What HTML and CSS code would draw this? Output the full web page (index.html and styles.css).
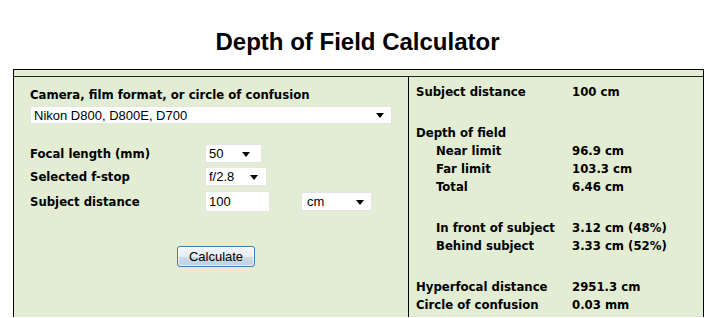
FILE: index.html
```html
<!DOCTYPE html>
<html lang="en">
<head>
  <meta charset="UTF-8">
  <title>Depth of Field Calculator</title>
  <link rel="stylesheet" href="styles.css">
</head>
<body>
  <h1>Depth of Field Calculator</h1>

  <div class="calc">
    <div class="calc-top"></div>
    <div class="calc-body">

      <!-- inputs -->
      <div class="inputs">
        <div class="label">Camera, film format, or circle of confusion</div>
        <span class="pick pick-camera">
          <select id="camera">
            <option>Nikon D800, D800E, D700</option>
          </select>
        </span>

        <div class="form-row row-focal">
          <span class="label">Focal length (mm)</span>
          <span class="pick pick-focal">
            <select id="focal"><option>50</option></select>
          </span>
        </div>
        <div class="form-row row-stop">
          <span class="label">Selected f-stop</span>
          <span class="pick pick-stop">
            <select id="fstop"><option>f/2.8</option></select>
          </span>
        </div>
        <div class="form-row row-dist">
          <span class="label">Subject distance</span>
          <input type="text" id="distance" value="100">
          <span class="pick pick-unit">
            <select id="unit"><option>cm</option></select>
          </span>
        </div>

        <div class="actions">
          <button type="button">Calculate</button>
        </div>
      </div>

      <!-- results -->
      <div class="results">
        <div class="group">
          <div class="res-row"><span class="res-label">Subject distance</span><span>100 cm</span></div>
        </div>
        <div class="group">
          <div class="res-row"><span class="res-label">Depth of field</span><span></span></div>
          <div class="res-row sub"><span class="res-label">Near limit</span><span>96.9 cm</span></div>
          <div class="res-row sub"><span class="res-label">Far limit</span><span>103.3 cm</span></div>
          <div class="res-row sub"><span class="res-label">Total</span><span>6.46 cm</span></div>
        </div>
        <div class="group">
          <div class="res-row sub"><span class="res-label">In front of subject</span><span>3.12 cm (48%)</span></div>
          <div class="res-row sub"><span class="res-label">Behind subject</span><span>3.33 cm (52%)</span></div>
        </div>
        <div class="group">
          <div class="res-row"><span class="res-label">Hyperfocal distance</span><span>2951.3 cm</span></div>
          <div class="res-row"><span class="res-label">Circle of confusion</span><span>0.03 mm</span></div>
        </div>
      </div>

    </div>
  </div>
</body>
</html>
```

FILE: styles.css
```css
body {
  margin: 0;
  background: #fff;
  color: #000;
  font-family: "DejaVu Sans", sans-serif;
  font-stretch: condensed;
}

h1 {
  margin: 0 0 14px;
  padding-top: 29px;
  line-height: 26px;
  font-family: "Liberation Sans", Arial, sans-serif;
  font-stretch: normal;
  font-size: 24px;
  text-align: center;
}

.calc {
  margin-left: 13px;
  width: 689px;
  border: 1px solid #000;
  border-bottom: none;
  background: #e2edd4;
}

.calc-top {
  height: 6px;
  border-bottom: 1px solid #222;
}

.calc-body {
  display: flex;
}

.label,
.res-row {
  font-size: 13px;
  font-weight: bold;
}

/* left column */
.inputs {
  width: 362px;
  padding: 10px 16px 50px;
  border-right: 1px solid #000;
}

.inputs > .label {
  line-height: 16px;
}

.pick {
  position: relative;
  display: block;
}

.pick::after {
  content: "";
  position: absolute;
  top: 50%;
  right: 8px;
  margin-top: -2px;
  border-left: 4px solid transparent;
  border-right: 4px solid transparent;
  border-top: 5px solid #000;
  pointer-events: none;
}

select,
input {
  appearance: none;
  -webkit-appearance: none;
  display: block;
  box-sizing: border-box;
  margin: 0;
  padding: 0 3px;
  border: 1px solid #e4e4e4;
  border-radius: 0;
  background: #fff;
  color: #000;
  font-family: "Liberation Sans", Arial, sans-serif;
  font-stretch: normal;
  font-size: 13px;
  outline: none;
}

.pick-camera {
  margin-top: 3px;
}

.pick-camera select {
  width: 362px;
  height: 18px;
}

.form-row {
  display: flex;
  align-items: center;
}

.form-row .label {
  width: 175px;
  line-height: 16px;
}

.row-focal {
  margin-top: 20px;
}

.row-stop {
  margin-top: 4px;
}

.row-dist {
  margin-top: 5px;
}

.pick-focal select {
  width: 57px;
  height: 19px;
}

.pick-focal::after {
  right: 12px;
}

.pick-stop select {
  width: 62px;
  height: 19px;
}

.pick-stop::after {
  right: 9px;
}

#distance {
  width: 65px;
  height: 21px;
}

.pick-unit {
  margin-left: 31px;
}

.pick-unit select {
  width: 71px;
  height: 19px;
  padding-left: 5px;
}

.actions {
  margin-top: 34px;
  padding-left: 147px;
}

button {
  display: block;
  width: 78px;
  height: 21px;
  padding: 0;
  border: 1px solid #3d7bad;
  border-radius: 3px;
  background: linear-gradient(#f4f8fb, #e6eef4 50%, #cddbe6 51%, #bfd2e0);
  box-shadow: inset 0 0 0 1px rgba(255, 255, 255, 0.7);
  color: #000;
  font-family: "Liberation Sans", Arial, sans-serif;
  font-size: 13px;
  cursor: pointer;
}

/* right column */
.results {
  flex: 1;
  padding: 6px 0 0 7px;
}

.group + .group {
  margin-top: 23px;
}

.res-row {
  display: flex;
  line-height: 18px;
}

.res-label {
  width: 156px;
}

.res-row.sub .res-label {
  width: 136px;
  padding-left: 20px;
}
```
